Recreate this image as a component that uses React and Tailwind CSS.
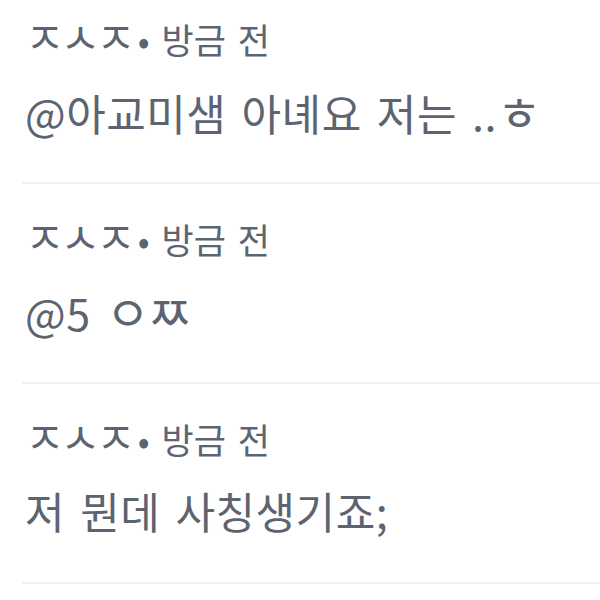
import React from 'react';

// wide jamo like the reference font
const J = ({ children }) => <span className="text-[43px] tracking-[-4px] mr-[6px]">{children}</span>;
const Jm = ({ children }) => <span className="text-[48px] tracking-[-2px]">{children}</span>;

const comments = [
  { author: 'ㅈㅅㅈ', time: '방금 전', text: <>@아교미샘 아녜요 저는 ..<Jm>ㅎ</Jm></> },
  { author: 'ㅈㅅㅈ', time: '방금 전', text: <>@5 <Jm>ㅇㅉ</Jm></> },
  { author: 'ㅈㅅㅈ', time: '방금 전', text: '저 뭔데 사칭생기죠;' },
];

export default function App() {
  return (
    <div
      className="w-[600px] h-[600px] overflow-hidden bg-white"
      style={{ fontFamily: '"Noto Sans CJK KR", "Noto Sans", sans-serif' }}
    >
      <div className="-mt-[16px]">
        {comments.map((c, i) => (
          <div key={i} className="ml-[22px] h-[200px] border-b-2 border-[#eef0f3] pl-[3px] pt-[30px] flex flex-col">
            <div className="text-[35px] leading-[42px] text-[#5d6471] [word-spacing:4px] whitespace-nowrap">
              <J>{c.author}</J>• {c.time}
            </div>
            <div className="mt-[25px] text-[43px] leading-[50px] tracking-[0.5px] text-[#5d6471] [word-spacing:5px] whitespace-nowrap">
              {c.text}
            </div>
          </div>
        ))}
      </div>
    </div>
  );
}
